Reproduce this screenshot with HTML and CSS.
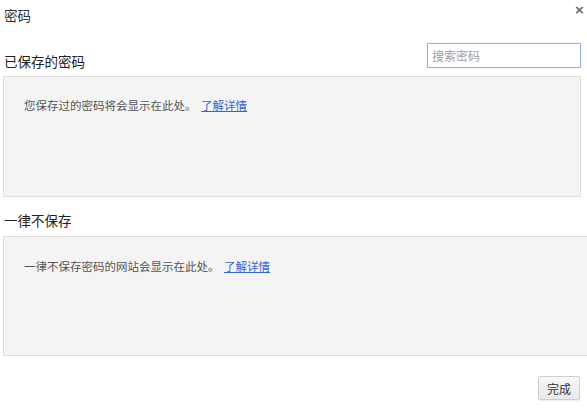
FILE: index.html
```html
<!DOCTYPE html>
<html lang="zh-CN">
<head>
<meta charset="utf-8">
<link rel="stylesheet" href="styles.css">
</head>
<body>
<div class="dialog">
  <div class="titlebar">
    <span class="title">密码</span>
    <span class="close">×</span>
  </div>
  <div class="section-head">
    <span class="heading">已保存的密码</span>
    <input class="search" type="text" placeholder="搜索密码">
  </div>
  <div class="panel panel-saved">
    <p class="msg">您保存过的密码将会显示在此处。 <a class="link" href="#">了解详情</a></p>
  </div>
  <div class="section-head2">
    <span class="heading">一律不保存</span>
  </div>
  <div class="panel panel-never">
    <p class="msg">一律不保存密码的网站会显示在此处。 <a class="link" href="#">了解详情</a></p>
  </div>
  <div class="footer">
    <button class="done">完成</button>
  </div>
</div>
</body>
</html>
```

FILE: styles.css
```css
html, body {
  margin: 0;
  padding: 0;
  background: #fff;
}
body {
  width: 587px;
  height: 408px;
  overflow: hidden;
  font-family: "Noto Sans CJK SC", "Noto Sans", sans-serif;
  color: #333;
}
.dialog {
  display: flex;
  flex-direction: column;
  padding: 0 0 0 3px;
}
.titlebar {
  display: flex;
  justify-content: space-between;
  align-items: flex-start;
  height: 30px;
  padding-top: 5px;
  box-sizing: border-box;
}
.title {
  font-size: 13.5px;
  line-height: 20px;
  padding-left: 1px;
  color: #333;
}
.close {
  font-size: 13px;
  line-height: 8px;
  font-weight: bold;
  color: #666;
  margin-right: 2px;
  margin-top: 1px;
  font-family: "DejaVu Sans", sans-serif;
}
.section-head {
  display: flex;
  justify-content: space-between;
  align-items: flex-end;
  height: 46px;
  margin-right: 6px;
}
.heading {
  font-size: 13.5px;
  line-height: 20px;
  padding-left: 1px;
  color: #222;
  margin-bottom: 5px;
}
.search {
  width: 154px;
  height: 25px;
  box-sizing: border-box;
  border: 1px solid #8eaee6;
  border-radius: 1px;
  padding: 0 4px;
  font-family: "Noto Sans CJK SC", sans-serif;
  font-size: 12px;
  outline: none;
  margin-bottom: 8px;
  box-shadow: 0 0 1px #b8cdf1;
}
.search::placeholder {
  color: #a0a0a0;
}
.panel {
  background: #f4f4f4;
  border: 1px solid #dedede;
  box-sizing: border-box;
  height: 121px;
  padding: 19px 0 0 20px;
}
.panel-saved {
  margin-right: 6px;
}
.panel-never {
  margin-right: 0;
  border-right: none;
  height: 120px;
  padding-top: 20px;
}
.msg {
  margin: 0;
  font-size: 11.5px;
  line-height: 18px;
  color: #555;
}
.link {
  color: #3365d5;
  text-decoration: underline;
  margin-left: 2px;
}
.section-head2 {
  height: 39px;
  display: flex;
  align-items: center;
  padding-top: 6px;
  box-sizing: border-box;
}
.section-head2 .heading {
  margin-bottom: 0;
}
.footer {
  display: flex;
  justify-content: flex-end;
  padding-top: 20px;
  margin-right: 7px;
}
.done {
  width: 42px;
  height: 24px;
  border: 1px solid #cfcfcf;
  border-radius: 2px;
  background: linear-gradient(#f7f7f7, #e9e9e9);
  font-family: "Noto Sans CJK SC", sans-serif;
  font-size: 12px;
  color: #333;
  padding: 0;
  box-shadow: 0 1px 1px rgba(0,0,0,0.08);
}
```
